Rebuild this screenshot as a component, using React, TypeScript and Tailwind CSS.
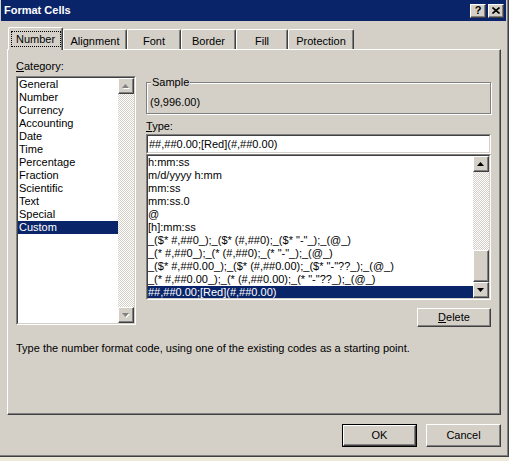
import React from "react";

const categories = [
  "General",
  "Number",
  "Currency",
  "Accounting",
  "Date",
  "Time",
  "Percentage",
  "Fraction",
  "Scientific",
  "Text",
  "Special",
  "Custom",
];

const codes = [
  "h:mm:ss",
  "m/d/yyyy h:mm",
  "mm:ss",
  "mm:ss.0",
  "@",
  "[h]:mm:ss",
  '_($* #,##0_);_($* (#,##0);_($* "-"_);_(@_)',
  '_(* #,##0_);_(* (#,##0);_(* "-"_);_(@_)',
  '_($* #,##0.00_);_($* (#,##0.00);_($* "-"??_);_(@_)',
  '_(* #,##0.00_);_(* (#,##0.00);_(* "-"??_);_(@_)',
  "##,##0.00;[Red](#,##0.00)",
];

const tabs = [
  { label: "Number", w: "w-[55px]" },
  { label: "Alignment", w: "w-[64px]" },
  { label: "Font", w: "w-[54px]" },
  { label: "Border", w: "w-[55px]" },
  { label: "Fill", w: "w-[52px]" },
  { label: "Protection", w: "w-[66px]" },
];

const raised =
  "bg-[#d4d0c8] border border-t-white border-l-white border-r-[#404040] border-b-[#404040] shadow-[inset_-1px_-1px_0_#808080]";

const Arrow = ({ dir, disabled }: { dir: "up" | "down"; disabled?: boolean }) => {
  const pts = dir === "up" ? "3.5,0 7,4 0,4" : "0,0 7,0 3.5,4";
  return (
    <svg width="8" height="5" viewBox="0 0 8 5" className="block">
      {disabled && <polygon points={pts} fill="#ffffff" transform="translate(1,1)" />}
      <polygon points={pts} fill={disabled ? "#808080" : "#000000"} />
    </svg>
  );
};

const ScrollButton = ({ dir, disabled }: { dir: "up" | "down"; disabled?: boolean }) => (
  <div className={`${raised} w-[16px] h-[16px] shrink-0 flex items-center justify-center`}>
    <Arrow dir={dir} disabled={disabled} />
  </div>
);

const Track = ({ className = "" }: { className?: string }) => (
  <div
    className={`bg-[repeating-conic-gradient(#ffffff_0%_25%,#d4d0c8_0%_50%)] bg-[length:2px_2px] ${className}`}
  />
);

const Sunken = ({ className = "", children }: { className?: string; children: React.ReactNode }) => (
  <div className={`border border-t-[#808080] border-l-[#808080] border-r-white border-b-white ${className}`}>
    <div className="h-full border border-t-[#404040] border-l-[#404040] border-r-[#d4d0c8] border-b-[#d4d0c8] bg-white overflow-hidden">
      {children}
    </div>
  </div>
);

const Accel = ({ text }: { text: string }) => (
  <>
    <span className="underline underline-offset-[1px]">{text[0]}</span>
    {text.slice(1)}
  </>
);

export default function App() {
  return (
    <div className="w-[509px] h-[461px] bg-[#ece9d8] text-black text-[11px] leading-[13px] font-['Liberation_Sans',Arial,sans-serif]">
      <div className="w-[509px] h-[457px] bg-[#d4d0c8] flex flex-col pl-[1px] pr-[2px] border-r border-b border-r-[#404040] border-b-[#404040] shadow-[inset_-1px_-1px_0_#808080]">
        {/* title bar */}
        <div className="h-[21px] bg-[#0a246a] flex items-center pl-[3px] pr-[2px]">
          <span className="text-white font-bold flex-1">Format Cells</span>
          <div className={`${raised} w-[16px] h-[14px] flex items-center justify-center font-bold text-[11px] leading-none`}>
            ?
          </div>
          <div className={`${raised} w-[16px] h-[14px] ml-[2px] flex items-center justify-center`}>
            <svg width="8" height="7" viewBox="0 0 8 7">
              <path d="M0.5 0.5 L7.5 6.5 M7.5 0.5 L0.5 6.5" stroke="#000" strokeWidth="1.6" />
            </svg>
          </div>
        </div>

        <div className="pl-[6px] pr-[5px]">
          {/* tab strip */}
          <div className="flex items-end h-[22px] mt-[6px] pl-[1px]">
            {tabs.map((t, i) =>
              i === 0 ? (
                <div
                  key={t.label}
                  className={`${t.w} h-[23px] -mb-[1px] relative z-10 bg-[#d4d0c8] border-l border-t border-r border-l-white border-t-white border-r-[#404040] rounded-t-[2px] shadow-[inset_-1px_0_0_#808080] flex items-start justify-center pt-[3px]`}
                >
                  <span className="w-[50px] h-[16px] border border-dotted border-black flex items-center justify-center">
                    {t.label}
                  </span>
                </div>
              ) : (
                <div
                  key={t.label}
                  className={`${t.w} h-[20px] bg-[#d4d0c8] border-l border-t border-r border-l-white border-t-white border-r-[#404040] rounded-t-[2px] shadow-[inset_-1px_0_0_#808080] flex items-center justify-center pt-[3px]`}
                >
                  {t.label}
                </div>
              )
            )}
          </div>

          {/* tab page */}
          <div className="h-[366px] border-l border-t border-r border-b border-l-white border-t-white border-r-[#404040] border-b-[#404040] shadow-[inset_-1px_-1px_0_#808080] pt-[10px] pl-[8px]">
            <div className="flex gap-[10px]">
              <div className="w-[120px] flex flex-col">
                <div className="h-[13px]">
                  <Accel text="Category:" />
                </div>
                <Sunken className="mt-[3px] h-[249px]">
                  <div className="flex h-full">
                    <div className="flex-1">
                      {categories.map((c) => (
                        <div
                          key={c}
                          className={`h-[13px] pl-[1px] ${c === "Custom" ? "bg-[#0a246a] text-white" : ""}`}
                        >
                          {c}
                        </div>
                      ))}
                    </div>
                    <div className="w-[16px] flex flex-col">
                      <ScrollButton dir="up" disabled />
                      <Track className="flex-1" />
                      <ScrollButton dir="down" disabled />
                    </div>
                  </div>
                </Sunken>
              </div>

              <div className="w-[345px] flex flex-col pt-[16px]">
                <fieldset className="h-[38px] border border-[#808080] shadow-[inset_1px_1px_0_#ffffff,1px_1px_0_#ffffff] pl-[3px] pt-[7px]">
                  <legend className="ml-[1px] px-[1px] bg-[#d4d0c8]">Sample</legend>
                  <div>(9,996.00)</div>
                </fieldset>
                <div className="mt-[6px] h-[13px]">
                  <Accel text="Type:" />
                </div>
                <Sunken className="mt-[1px] h-[20px]">
                  <div className="h-full flex items-center pl-[1px]">##,##0.00;[Red](#,##0.00)</div>
                </Sunken>
                <Sunken className="h-[146px]">
                  <div className="flex h-full">
                    <div className="flex-1 whitespace-nowrap overflow-hidden">
                      {codes.map((c, i) => (
                        <div
                          key={c}
                          className={`h-[13px] ${i === codes.length - 1 ? "bg-[#0a246a] text-white" : ""}`}
                        >
                          {c}
                        </div>
                      ))}
                    </div>
                    <div className="w-[16px] flex flex-col">
                      <ScrollButton dir="up" />
                      <Track className="h-[78px]" />
                      <div className={`${raised} h-[32px]`} />
                      <ScrollButton dir="down" />
                    </div>
                  </div>
                </Sunken>
                <div className="self-end mt-[8px] w-[74px] h-[19px]">
                  <div className={`${raised} w-full h-full flex items-center justify-center`}>
                    <Accel text="Delete" />
                  </div>
                </div>
              </div>
            </div>

            <div className="mt-[15px]">
              Type the number format code, using one of the existing codes as a starting point.
            </div>
          </div>

          {/* dialog buttons */}
          <div className="flex justify-end gap-[9px] mt-[9px]">
            <div className="w-[75px] h-[23px] border border-black">
              <div className={`${raised} w-full h-full flex items-center justify-center`}>OK</div>
            </div>
            <div className={`${raised} w-[75px] h-[23px] flex items-center justify-center`}>Cancel</div>
          </div>
        </div>
      </div>
    </div>
  );
}
